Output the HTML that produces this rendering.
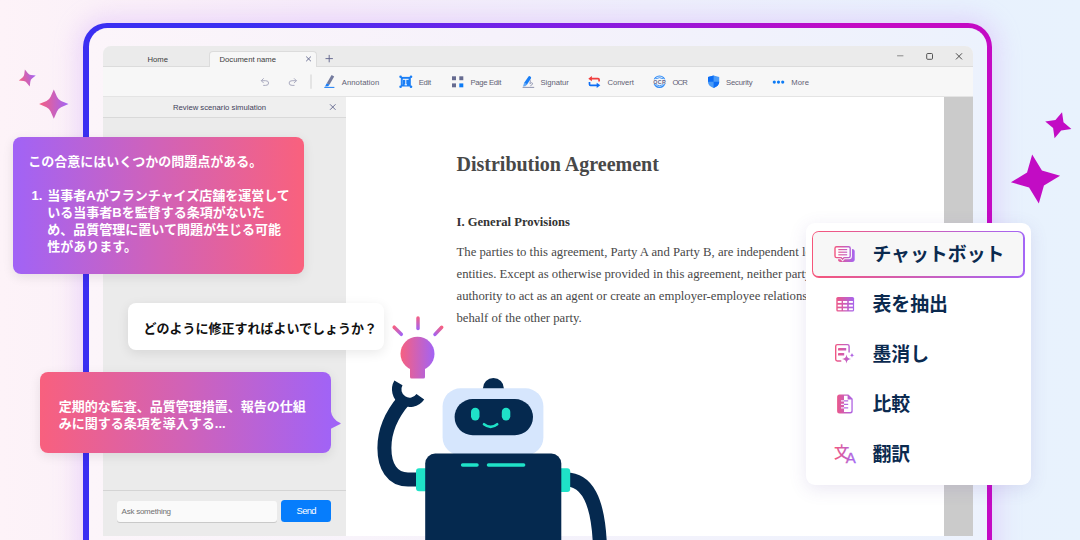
<!DOCTYPE html>
<html lang="ja">
<head>
<meta charset="utf-8">
<title>Review scenario simulation</title>
<style>
*{box-sizing:border-box;margin:0;padding:0}
html,body{width:1080px;height:540px;overflow:hidden}
body{position:relative;font-family:"Liberation Sans","Noto Sans CJK JP",sans-serif;
  background:linear-gradient(90deg,#fdf3f8 0%,#f6ecfa 30%,#eeeffc 60%,#e8f1fd 88%,#e8f2fd 100%);}
.abs{position:absolute}
/* glow + frame */
#glow{left:83px;top:23px;width:909px;height:560px;border-radius:24px;box-shadow:0 0 22px 6px rgba(214,170,250,.38);}
#frame{left:83px;top:23px;width:909.3px;height:560px;border-radius:24px;
  background:linear-gradient(90deg,#3b2ff2 0%,#3b2ff2 18%,#7a1fe6 50%,#c40ac4 85%,#c40ac4 100%);}
#inner{left:88.7px;top:28.4px;width:897.9px;height:560px;border-radius:18.5px;
  background:linear-gradient(90deg,#fcf5fa 0%,#f6f2fb 45%,#ecf2fd 100%);}
/* app window */
#win{left:103px;top:46px;width:870px;height:490px;border-radius:8px 8px 0 0;background:#f7f7f7;overflow:hidden}
#tabbar{left:0;top:0;width:870px;height:20.5px;background:#ebebeb;border-bottom:1px solid #dcdcdc}
#tab{left:106px;top:5px;width:108px;height:16px;background:#f7f7f7;border:1px solid #dcdcdc;border-bottom:none;border-radius:4px 4px 0 0}
.ui{font-size:7.7px;color:#3b3b3b;white-space:nowrap;line-height:10px}
#toolbar{left:0;top:20.5px;width:870px;height:30.5px;background:#f7f7f7;border-bottom:1px solid #e4e4e4}
.tl{top:31.7px;color:#5f5f74}
#panel{left:0;top:51px;width:242.5px;height:439px;background:#ebebeb}
#phead{left:0;top:0;width:242.5px;height:20.5px;background:#efefef;border-bottom:1px solid #d9d9d9}
#pfoot{left:0;top:393px;width:242.5px;height:46px;border-top:1px solid #d4d4d4;background:#ebebeb}
#input{left:14.3px;top:10px;width:159.7px;height:21px;background:#fafafa;border-radius:3px;box-shadow:0 1px 0 #c9c9c9;font-size:8px;letter-spacing:-.25px;color:#707070;line-height:21px;padding-left:4.3px}
#send{left:178.4px;top:9px;width:49.5px;height:22px;background:#067dfc;border-radius:3.5px;color:#fff;font-size:9.4px;letter-spacing:-.6px;line-height:22px;text-align:center;padding-left:.2px}
#doc{left:242.5px;top:51px;width:598.5px;height:439px;background:#fff}
#scroll{left:841px;top:51px;width:29px;height:439px;background:#cbcbcb}
.serif{font-family:"Liberation Serif","Noto Serif CJK SC",serif;color:#484848;white-space:nowrap}
/* bubbles */
.jp{font-family:"Liberation Sans","Noto Sans CJK JP",sans-serif;font-weight:700;font-size:13px;line-height:17px;white-space:nowrap}
#b1{left:13px;top:137px;width:291px;height:137px;border-radius:8px;background:linear-gradient(90deg,#a163f6 0%,#d162b8 50%,#f9617d 100%);color:#fff;box-shadow:0 3px 12px rgba(0,0,0,.09)}
#b2{left:128px;top:303px;width:256px;height:47px;border-radius:8px;background:#fff;color:#111;box-shadow:0 3px 12px rgba(0,0,0,.09)}
#b3{left:40.3px;top:372px;width:290.5px;height:81px;border-radius:8px;background:linear-gradient(90deg,#f8607e 0%,#d062b8 50%,#a163f6 100%);color:#fff;box-shadow:0 3px 12px rgba(0,0,0,.09)}
/* menu */
#menu{left:806px;top:223px;width:225px;height:262px;border-radius:9px;background:#fff;box-shadow:0 4px 18px rgba(90,70,160,.13)}
#sel{left:5.5px;top:7.5px;width:213.5px;height:47px;border-radius:7px;background:linear-gradient(90deg,#f6567a,#a466f6);}
#sel i{position:absolute;left:1.8px;top:1.8px;right:1.8px;bottom:1.8px;border-radius:5.4px;background:#f7f7f7}
.mi{left:66.4px;font-family:"Liberation Sans","Noto Sans CJK JP",sans-serif;font-weight:700;font-size:18.9px;line-height:30px;color:#0b2a4f;white-space:nowrap}
</style>
</head>
<body>
<div id="glow" class="abs"></div>
<div id="frame" class="abs"></div>
<div id="inner" class="abs"></div>

<div id="win" class="abs">
  <div id="tabbar" class="abs"></div>
  <div id="tab" class="abs"></div>
  <div class="abs ui" style="left:44.5px;top:8.7px">Home</div>
  <div class="abs ui" style="left:116.5px;top:8.7px">Document name</div>
  <div id="toolbar" class="abs"></div>
  <div class="abs ui tl" style="left:238.7px;letter-spacing:.08px">Annotation</div>
  <div class="abs ui tl" style="left:315.7px;letter-spacing:-.25px">Edit</div>
  <div class="abs ui tl" style="left:367.5px;letter-spacing:-.32px">Page Edit</div>
  <div class="abs ui tl" style="left:437.5px;letter-spacing:-.05px">Signatur</div>
  <div class="abs ui tl" style="left:504.5px;letter-spacing:-.1px">Convert</div>
  <div class="abs ui tl" style="left:569.5px;letter-spacing:-.9px">OCR</div>
  <div class="abs ui tl" style="left:623px;letter-spacing:-.17px">Security</div>
  <div class="abs ui tl" style="left:688.2px;letter-spacing:.09px">More</div>

  <div id="panel" class="abs">
    <div id="phead" class="abs"></div>
    <div class="abs ui" style="left:70px;top:5.5px;color:#3f3f5a">Review scenario simulation</div>
    <div id="pfoot" class="abs">
      <div id="input" class="abs">Ask something</div>
      <div id="send" class="abs">Send</div>
    </div>
  </div>
  <div id="doc" class="abs">
    <div class="abs serif" style="left:111px;top:55px;font-size:20px;font-weight:700;line-height:24px">Distribution Agreement</div>
    <div class="abs serif" style="left:111px;top:117px;font-size:12.6px;font-weight:700;line-height:16px;color:#333">I. General Provisions</div>
    <div class="abs serif" style="left:111px;top:144px;font-size:12.72px;line-height:22px">The parties to this agreement, Party A and Party B, are independent legal<br>entities. Except as otherwise provided in this agreement, neither party has the<br>authority to act as an agent or create an employer-employee relationship on<br>behalf of the other party.</div>
  </div>
  <div id="scroll" class="abs"></div>

  <!-- window chrome icons (page coordinates) -->
  <svg class="abs" style="left:-103px;top:-46px" width="1080" height="540" viewBox="0 0 1080 540" fill="none">
    <!-- tab close / plus -->
    <path d="M306.200 56.600 L310.900 61.200 M310.900 56.600 L306.200 61.200" stroke="#5d628a" stroke-width=".9"/>
    <path d="M329.200 54.900 V62.300 M325.500 58.600 H332.900" stroke="#5d628a" stroke-width=".9"/>
    <!-- window controls -->
    <path d="M897.100 55.800 H903.400" stroke="#8a8a8a" stroke-width="1"/>
    <rect x="926.700" y="53.500" width="5.800" height="5.800" rx="1" stroke="#444" stroke-width=".9"/>
    <path d="M956 53.300 L962 59.400 M962 53.300 L956 59.400" stroke="#3c3c3c" stroke-width=".9"/>
    <!-- undo / redo -->
    <g stroke="#a9aabf" stroke-width="1" stroke-linecap="round" stroke-linejoin="round">
      <path d="M263.400 78.600 L261.300 80.700 L263.400 82.800 M261.500 80.700 H265.600 Q268.600 80.700 268.600 83 Q268.600 85.400 265.600 85.400 H263.600"/>
      <path d="M294.300 78.600 L296.400 80.700 L294.300 82.800 M296.200 80.700 H292.100 Q289.100 80.700 289.100 83 Q289.100 85.400 292.100 85.400 H294.100"/>
    </g>
    <path d="M311 74.400 V88.800" stroke="#dadada" stroke-width="1.300"/>
    <!-- annotation pen -->
    <path d="M331.600 75.100 L334.200 76.500 L329.600 84.400 L326.600 83.600 Z" fill="#747b9e"/>
    <path d="M326.600 83.600 L329.600 84.400 L328.200 86.200 L325 86.600 Z" fill="#1a7ef5"/>
    <path d="M324.300 87.400 H334.400" stroke="#1a7ef5" stroke-width="1"/>
    <!-- edit -->
    <rect x="400.800" y="76.900" width="10" height="9.600" fill="#1a7ef5"/>
    <g fill="#1a7ef5"><circle cx="400.600" cy="76.700" r="1.300"/><circle cx="411" cy="76.700" r="1.300"/><circle cx="400.600" cy="86.700" r="1.300"/><circle cx="411" cy="86.700" r="1.300"/></g>
    <path d="M403 79.300 H408.600 M405.800 79.300 V84.700 M404.600 84.800 H407" stroke="#fff" stroke-width="1"/>
    <path d="M402.300 79 V84.600" stroke="#8fc0fa" stroke-width=".6"/>
    <!-- page edit -->
    <rect x="452" y="76.300" width="4" height="3.900" fill="#666b90"/><rect x="459.300" y="76.300" width="4" height="3.900" fill="#666b90"/>
    <rect x="452" y="83.400" width="4" height="3.900" fill="#666b90"/><rect x="459.300" y="83.400" width="4" height="3.900" fill="#0d7bf5"/>
    <!-- signature -->
    <path d="M529.500 77.800 L525.700 83.500" stroke="#1a7ef5" stroke-width="3.200" stroke-linecap="round"/>
    <path d="M524.300 82.300 L527.100 84.200 L525.300 86.300 L523 86.600 Z" fill="#62a9f8"/>
    <path d="M530.500 80.300 L529.900 83.600 Q531.800 82 532.600 83.300 Q533 84.600 530.300 85.800" stroke="#747b9e" stroke-width=".7"/>
    <path d="M522.600 87.400 H534.200" stroke="#747b9e" stroke-width=".8"/>
    <!-- convert -->
    <path d="M599.100 81.600 V79.700 Q599.100 78.700 598.100 78.700 H590.500" stroke="#f03e3e" stroke-width="1.700"/>
    <path d="M591.900 76.100 L588.300 78.700 L591.900 81.300 Z" fill="#f03e3e"/>
    <path d="M589.500 82 V84.300 Q589.500 85.300 590.500 85.300 H598" stroke="#0d6ef5" stroke-width="1.700"/>
    <path d="M596.700 82.700 L600.300 85.300 L596.700 87.900 Z" fill="#0d6ef5"/>
    <!-- ocr -->
    <circle cx="659.500" cy="81.700" r="5.700" stroke="#2f8bf6" stroke-width="1.200"/>
    <path d="M655.600 78.900 Q659.500 76.400 663.400 78.900 M655.600 84.500 Q659.500 87 663.400 84.500" stroke="#2f8bf6" stroke-width=".9"/>
    <rect x="652.800" y="79.300" width="13.600" height="4.800" fill="#f7f7f7"/>
    <text x="659.700" y="83.700" text-anchor="middle" font-family="'Liberation Sans',sans-serif" font-weight="700" font-size="5.300" fill="#5d628a" letter-spacing=".3">OCR</text>
    <!-- security -->
    <path d="M713.600 75.600 L719.200 77 V82 Q719.200 85.800 713.600 88 Q708 85.800 708 82 V77 Z" fill="#4a9bf8"/>
    <path d="M713.600 75.600 L708 77 V81.800 H713.600 Z" fill="#0d6ef5"/>
    <path d="M713.600 81.800 H719.200 V82 Q719.200 85.800 713.600 88 Z" fill="#0d6ef5"/>
    <!-- more -->
    <g fill="#0d7bf5"><circle cx="774.300" cy="82.100" r="1.600"/><circle cx="778.500" cy="82.100" r="1.600"/><circle cx="782.700" cy="82.100" r="1.600"/></g>
    <!-- panel close -->
    <path d="M330 104.300 L335.500 109.800 M335.500 104.300 L330 109.800" stroke="#5d628a" stroke-width=".9"/>
  </svg>
</div>

<!-- chat bubbles -->
<div id="b1" class="abs jp">
  <div class="abs" style="left:15.3px;top:16.2px">この合意にはいくつかの問題点がある。</div>
  <div class="abs" style="left:18.5px;top:50.2px">1.</div>
  <div class="abs" style="left:34.3px;top:50.2px">当事者Aがフランチャイズ店舗を運営して<br>いる当事者Bを監督する条項がないた<br>め、品質管理に置いて問題が生じる可能<br>性があります。</div>
</div>
<div id="b2" class="abs jp"><div class="abs" style="left:15.5px;top:16.5px">どのように修正すればよいでしょうか？</div></div>
<div id="b3" class="abs jp">
  <div class="abs" style="left:18.5px;top:26px">定期的な監査、品質管理措置、報告の仕組<br>みに関する条項を導入する...</div>
</div>
<svg class="abs" style="left:329px;top:408px" width="14" height="24" viewBox="0 0 14 24"><path d="M1.500 2 Q3.400 12 11.300 15 Q12.200 15.500 11.300 16 L2.300 20.500 L1.500 21.500 Z" fill="#a163f6"/></svg>

<!-- menu -->
<div id="menu" class="abs">
  <div id="sel" class="abs"><i></i></div>
  <div class="abs mi" style="top:17px">チャットボット</div>
  <div class="abs mi" style="top:67px">表を抽出</div>
  <div class="abs mi" style="top:117px">墨消し</div>
  <div class="abs mi" style="top:167px">比較</div>
  <div class="abs mi" style="top:217px">翻訳</div>
</div>

<!-- decorative overlay: stars, robot, icons -->
<svg class="abs" style="left:0;top:0" width="1080" height="540" viewBox="0 0 1080 540">
  <defs>
    <linearGradient id="gs1" gradientUnits="userSpaceOnUse" x1="39" y1="0" x2="69" y2="0"><stop offset="0" stop-color="#f65f80"/><stop offset="1" stop-color="#a163f6"/></linearGradient>
    <linearGradient id="gs2" gradientUnits="userSpaceOnUse" x1="18" y1="0" x2="36" y2="0"><stop offset="0" stop-color="#f65f80"/><stop offset="1" stop-color="#a163f6"/></linearGradient>
    <linearGradient id="gso" x1="0" y1="0" x2="1" y2="0"><stop offset="0" stop-color="#f65f80"/><stop offset="1" stop-color="#a163f6"/></linearGradient>
    <linearGradient id="gr1" gradientUnits="userSpaceOnUse" x1="418" y1="316" x2="418" y2="330"><stop offset="0" stop-color="#f8607e"/><stop offset="1" stop-color="#a163f6"/></linearGradient>
    <linearGradient id="gr2" gradientUnits="userSpaceOnUse" x1="393.500" y1="326.500" x2="402" y2="335"><stop offset="0" stop-color="#f8607e"/><stop offset="1" stop-color="#a163f6"/></linearGradient>
    <linearGradient id="gr3" gradientUnits="userSpaceOnUse" x1="442.300" y1="326.600" x2="434" y2="335.300"><stop offset="0" stop-color="#f8607e"/><stop offset="1" stop-color="#a163f6"/></linearGradient>
    <linearGradient id="gb" gradientUnits="userSpaceOnUse" x1="400" y1="0" x2="435" y2="0"><stop offset="0" stop-color="#f8607e"/><stop offset="1" stop-color="#a163f6"/></linearGradient>
    <linearGradient id="gr" gradientUnits="objectBoundingBox" x1="0" y1="0" x2="0" y2="1"><stop offset="0" stop-color="#f8607e"/><stop offset="1" stop-color="#a163f6"/></linearGradient>
    <linearGradient id="gi" gradientUnits="userSpaceOnUse" x1="834" y1="0" x2="856" y2="0"><stop offset="0" stop-color="#f6567a"/><stop offset="1" stop-color="#a066f8"/></linearGradient>
  </defs>
  <!-- stars -->
  <g transform="translate(53.800 104.100)"><path d="M0.00 -14.70 L3.18 -7.29 Q4.41 -4.41 7.29 -3.18 L14.70 0.00 L7.29 3.18 Q4.41 4.41 3.18 7.29 L0.00 14.70 L-3.18 7.29 Q-4.41 4.41 -7.29 3.18 L-14.70 0.00 L-7.29 -3.18 Q-4.41 -4.41 -3.18 -7.29 L0.00 -14.70Z" fill="url(#gso)"/></g>
  <g transform="translate(27.300 78)"><path d="M0.00 -8.80 L1.90 -4.36 Q2.64 -2.64 4.36 -1.90 L8.80 0.00 L4.36 1.90 Q2.64 2.64 1.90 4.36 L0.00 8.80 L-1.90 4.36 Q-2.64 2.64 -4.36 1.90 L-8.80 0.00 L-4.36 -1.90 Q-2.64 -2.64 -1.90 -4.36 L0.00 -8.80Z" fill="url(#gso)" transform="rotate(-16)"/></g>
  <g transform="translate(1035.500 179) rotate(-7.700)"><path d="M0 -24.800 L7.500 -7.500 L24.800 0 L7.500 7.500 L0 24.800 L-7.500 7.500 L-24.800 0 L-7.500 -7.500Z" fill="#c20cc4"/></g>
  <g transform="translate(1058.300 125.200) rotate(16)"><path d="M0 -13.600 L4.200 -4.200 L13.600 0 L4.200 4.200 L0 13.600 L-4.200 4.200 L-13.600 0 L-4.200 -4.200Z" fill="#c20cc4"/></g>

  <!-- light bulb -->
  <g stroke-width="3.500" stroke-linecap="round" fill="none">
    <line x1="418" y1="318" x2="418" y2="328.500" stroke="url(#gr1)"/>
    <line x1="394.200" y1="327.200" x2="401.300" y2="334.300" stroke="url(#gr2)"/>
    <line x1="441.700" y1="327.300" x2="435" y2="334.400" stroke="url(#gr3)"/>
  </g>
  <circle cx="417.500" cy="353.800" r="17" fill="url(#gb)"/>
  <rect x="410" y="362" width="15" height="16.600" rx="1.500" fill="url(#gb)"/>

  <!-- robot -->
  <g id="robot">
    <path d="M420 479.500 L408 479.500 C392 479.500 384.400 466 384.400 448 C384.400 430 392 414 404 400" fill="none" stroke="#05294f" stroke-width="14"/>
    <path d="M420.350 396.760 A13 13 0 0 1 398.440 382.800" fill="none" stroke="#05294f" stroke-width="9.400"/>
    <path d="M566 479.500 C586 479.500 598.500 498 600 548" fill="none" stroke="#05294f" stroke-width="14"/>
    <rect x="416" y="468.300" width="12" height="23" rx="3" fill="#1fe2c8"/>
    <rect x="558" y="468.300" width="12.200" height="23.700" rx="3" fill="#1fe2c8"/>
    <circle cx="493.400" cy="388.500" r="10.500" fill="#05294f"/>
    <rect x="442.600" y="388.300" width="100.800" height="67" rx="18" fill="#d6e6fd"/>
    <rect x="454.600" y="399" width="78.400" height="36.200" rx="18.100" fill="#05294f"/>
    <rect x="471" y="407.800" width="8.500" height="12.600" rx="4.200" fill="#1fe2c8"/>
    <rect x="501.800" y="407.800" width="8.500" height="12.600" rx="4.200" fill="#1fe2c8"/>
    <path d="M484 424.200 Q490.600 429.400 497.200 424.200" fill="none" stroke="#1fe2c8" stroke-width="2.600" stroke-linecap="round"/>
    <rect x="425.200" y="453.500" width="136.100" height="100" rx="10" fill="#05294f"/>
    <line x1="462.600" y1="465.100" x2="477" y2="465.100" stroke="#1fe2c8" stroke-width="3.500" stroke-linecap="round"/>
    <line x1="488.500" y1="465.100" x2="523.600" y2="465.100" stroke="#1fe2c8" stroke-width="3.500" stroke-linecap="round"/>
  </g>

  <!-- menu icons -->
  <g id="ic-chat">
    <rect x="838" y="249.100" width="16.700" height="12.800" rx="2.600" fill="url(#gi)"/>
    <path d="M836.300 246 H849 Q851 246 851 248 V256.300 Q851 258.300 849 258.300 H844.200 L842.600 260 L841 258.300 H836.300 Q834.300 258.300 834.300 256.300 V248 Q834.300 246 836.300 246Z" fill="#fbfbfb" stroke="#f7f7f7" stroke-width="2"/>
    <path d="M836.600 246.700 H848.600 Q850.200 246.700 850.200 248.300 V256 Q850.200 257.600 848.600 257.600 H844 L842.600 259.200 L841.200 257.600 H836.600 Q835 257.600 835 256 V248.300 Q835 246.700 836.600 246.700Z" fill="#fdfdfd" stroke="url(#gi)" stroke-width="1.400"/>
    <g stroke="url(#gi)" stroke-width="1.200"><line x1="838.300" y1="249.600" x2="847.200" y2="249.600"/><line x1="838.300" y1="252.200" x2="847.200" y2="252.200"/><line x1="838.300" y1="254.800" x2="847.200" y2="254.800"/></g>
  </g>
  <g id="ic-table">
    <rect x="836.300" y="296.900" width="17.800" height="14.700" rx="1.600" fill="url(#gi)"/>
    <g fill="#fff">
      <rect x="837.700" y="301" width="3.900" height="1.900"/><rect x="843" y="301" width="4.200" height="1.900"/><rect x="848.800" y="301" width="4.100" height="1.900"/>
      <rect x="837.700" y="304.700" width="3.900" height="1.900"/><rect x="843" y="304.700" width="4.200" height="1.900"/><rect x="848.800" y="304.700" width="4.100" height="1.900"/>
      <rect x="837.700" y="308.300" width="3.900" height="1.900"/><rect x="843" y="308.300" width="4.200" height="1.900"/><rect x="848.800" y="308.300" width="4.100" height="1.900"/>
    </g>
  </g>
  <g id="ic-redact">
    <path d="M849.100 352 V346.300 Q849.100 344.600 847.400 344.600 H837.400 Q835.700 344.600 835.700 346.300 V359.300 Q835.700 361 837.400 361 H840.800" fill="none" stroke="url(#gi)" stroke-width="1.400" stroke-linecap="round"/>
    <rect x="838" y="348" width="8.200" height="2.600" rx=".4" fill="url(#gi)"/>
    <rect x="838" y="353" width="6.200" height="2.600" rx=".4" fill="url(#gi)"/>
    <path d="M846.500 354.600 C847 357.600 848 358.600 851 359.100 C848 359.600 847 360.600 846.500 363.600 C846 360.600 845 359.600 842 359.100 C845 358.600 846 357.600 846.500 354.600Z" fill="url(#gi)"/>
    <path d="M852 352.700 C852.300 354.400 852.800 354.900 854.500 355.200 C852.800 355.500 852.300 356 852 357.700 C851.700 356 851.200 355.500 849.500 355.200 C851.200 354.900 851.700 354.400 852 352.700Z" fill="url(#gi)"/>
  </g>
  <g id="ic-compare">
    <path d="M839.600 394.400 H848.400 L852.700 398.700 V411 Q852.700 413.500 850.200 413.500 H839.600 Q837.100 413.500 837.100 411 V396.900 Q837.100 394.400 839.600 394.400Z" fill="url(#gi)"/>
    <path d="M844 395.800 H847.600 V399.400 H851.400 V410.700 Q851.400 412.100 850 412.100 H844Z" fill="#fff"/>
    <g stroke-width="1.400"><path d="M841 400.900 H844 M841 404.400 H844 M841 407.900 H844" stroke="#f3e9f6"/><path d="M844 400.900 H848.200 M844 404.400 H848.200 M844 407.900 H848.200" stroke="#b56ae0"/></g>
  </g>
  <g id="ic-trans" font-family="'Liberation Sans','Noto Sans CJK JP',sans-serif" fill="url(#gi)">
    <text x="834" y="457.900" font-size="15.400" font-weight="500">文</text>
    <text x="845.700" y="462.500" font-size="15" stroke="url(#gi)" stroke-width=".35">A</text>
  </g>
</svg>
</body>
</html>
